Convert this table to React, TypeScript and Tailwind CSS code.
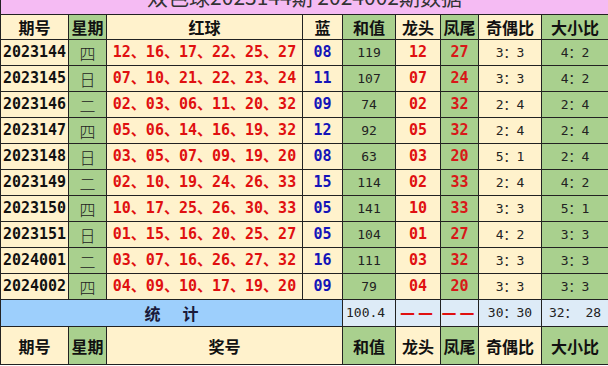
import React from "react";

const ROWS = [
  { q: "2023144", w: "四", red: "12、16、17、22、25、27", blue: "08", sum: "119", head: "12", tail: "27", oe: "3：3", bs: "4：2" },
  { q: "2023145", w: "日", red: "07、10、21、22、23、24", blue: "11", sum: "107", head: "07", tail: "24", oe: "3：3", bs: "4：2" },
  { q: "2023146", w: "二", red: "02、03、06、11、20、32", blue: "09", sum: "74", head: "02", tail: "32", oe: "2：4", bs: "2：4" },
  { q: "2023147", w: "四", red: "05、06、14、16、19、32", blue: "12", sum: "92", head: "05", tail: "32", oe: "2：4", bs: "2：4" },
  { q: "2023148", w: "日", red: "03、05、07、09、19、20", blue: "08", sum: "63", head: "03", tail: "20", oe: "5：1", bs: "2：4" },
  { q: "2023149", w: "二", red: "02、10、19、24、26、33", blue: "15", sum: "114", head: "02", tail: "33", oe: "2：4", bs: "4：2" },
  { q: "2023150", w: "四", red: "10、17、25、26、30、33", blue: "05", sum: "141", head: "10", tail: "33", oe: "3：3", bs: "5：1" },
  { q: "2023151", w: "日", red: "01、15、16、20、25、27", blue: "05", sum: "104", head: "01", tail: "27", oe: "4：2", bs: "3：3" },
  { q: "2024001", w: "二", red: "03、07、16、26、27、32", blue: "16", sum: "111", head: "03", tail: "32", oe: "3：3", bs: "3：3" },
  { q: "2024002", w: "四", red: "04、09、10、17、19、20", blue: "09", sum: "79", head: "04", tail: "20", oe: "3：3", bs: "3：3" },
];

const cream = "bg-[#fff2cc]";
const green = "bg-[#a9d08e]";
const cell = "border border-[#222] p-0 text-center align-middle";
const cjkBold = "font-['Noto_Sans_CJK_SC',sans-serif] font-bold text-[16px] text-[#111]";
const monoBold = "font-['DejaVu_Sans_Mono','Noto_Sans_CJK_SC',monospace] font-bold text-[15px]";
const mono = "font-['DejaVu_Sans_Mono','Noto_Sans_CJK_SC',monospace] text-[13px] text-[#222]";
const dash = "font-['DejaVu_Sans',sans-serif] font-bold text-[15px] tracking-[3px] text-[#e01010]";

function HeaderRow({ last }: { last?: boolean }) {
  const h = last ? "h-[38px]" : "h-[25px]";
  return (
    <tr className={`${h} ${cjkBold}`}>
      <td className={`${cell} ${cream}`}>期号</td>
      <td className={`${cell} ${green}`}>星期</td>
      {last ? (
        <td className={`${cell} ${cream}`} colSpan={2}>奖号</td>
      ) : (
        <>
          <td className={`${cell} ${cream}`}>红球</td>
          <td className={`${cell} ${cream}`}>蓝</td>
        </>
      )}
      <td className={`${cell} ${green}`}>和值</td>
      <td className={`${cell} ${cream}`}>龙头</td>
      <td className={`${cell} ${green}`}>凤尾</td>
      <td className={`${cell} ${cream}`}>奇偶比</td>
      <td className={`${cell} ${green}`}>大小比</td>
    </tr>
  );
}

export default function App() {
  return (
    <div className="w-[608px] h-[366px] overflow-hidden bg-white">
      <table className="w-[608px] table-fixed border-collapse">
        <colgroup>
          <col className="w-[68px]" />
          <col className="w-[38px]" />
          <col className="w-[196px]" />
          <col className="w-[40px]" />
          <col className="w-[53px]" />
          <col className="w-[45px]" />
          <col className="w-[38px]" />
          <col className="w-[63px]" />
          <col className="w-[67px]" />
        </colgroup>
        <tbody>
          <tr>
            <td colSpan={9} className={`${cell} border-t-0 bg-[#f5bbf3]`}>
              <div className="h-[14px] overflow-hidden">
                <div className="-mt-[15px] font-['Noto_Sans_CJK_SC',serif] text-[21px] leading-[22px] text-[#333]">
                  双色球2023144期 2024002期数据
                </div>
              </div>
            </td>
          </tr>
          <HeaderRow />
          {ROWS.map((r) => (
            <tr key={r.q} className="h-[26px]">
              <td className={`${cell} ${cream} ${monoBold} text-[#111]`}>{r.q}</td>
              <td className={`${cell} ${green} font-['Noto_Sans_CJK_SC',sans-serif] text-[16px] font-light text-[#222]`}>{r.w}</td>
              <td className={`${cell} ${cream} ${monoBold} text-[#e01010] whitespace-nowrap`}>{r.red}</td>
              <td className={`${cell} ${cream} ${monoBold} text-[#1414b8]`}>{r.blue}</td>
              <td className={`${cell} ${green} ${mono}`}>{r.sum}</td>
              <td className={`${cell} ${cream} ${monoBold} text-[#e01010]`}>{r.head}</td>
              <td className={`${cell} ${green} ${monoBold} text-[#d81818]`}>{r.tail}</td>
              <td className={`${cell} ${cream} ${mono}`}>{r.oe}</td>
              <td className={`${cell} ${green} ${mono}`}>{r.bs}</td>
            </tr>
          ))}
          <tr className="h-[27px]">
            <td colSpan={4} className={`${cell} bg-[#9dcffc] font-['Noto_Sans_CJK_SC',sans-serif] font-bold text-[16px] text-[#1a1a3a]`}>
              统<span className="inline-block w-[22px]" />计
            </td>
            <td className={`${cell} bg-[#ddebf7] ${mono} text-left pl-[3px]`}>100.4</td>
            <td className={`${cell} bg-[#ddebf7] ${dash}`}>——</td>
            <td className={`${cell} bg-[#ddebf7] ${dash}`}>——</td>
            <td className={`${cell} bg-[#ddebf7] ${mono}`}>30：30</td>
            <td className={`${cell} bg-[#ddebf7] ${mono}`}>32： 28</td>
          </tr>
          <HeaderRow last />
        </tbody>
      </table>
    </div>
  );
}
